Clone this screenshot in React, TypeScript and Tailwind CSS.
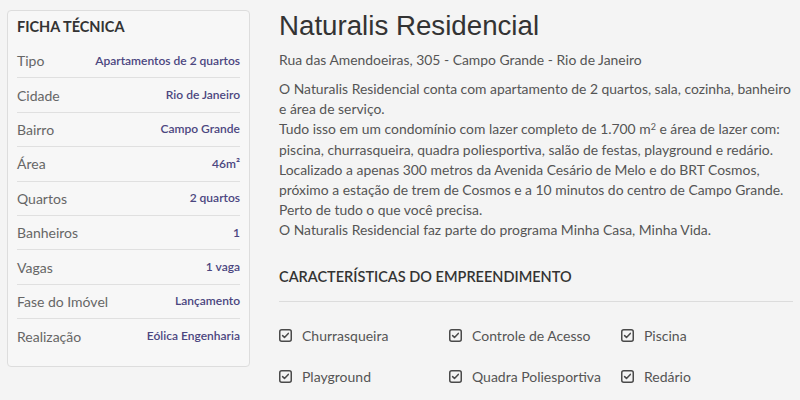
import React from "react";

const rows: [string, string][] = [
  ["Tipo", "Apartamentos de 2 quartos"],
  ["Cidade", "Rio de Janeiro"],
  ["Bairro", "Campo Grande"],
  ["Área", "46m²"],
  ["Quartos", "2 quartos"],
  ["Banheiros", "1"],
  ["Vagas", "1 vaga"],
  ["Fase do Imóvel", "Lançamento"],
  ["Realização", "Eólica Engenharia"],
];

const features = [
  "Churrasqueira",
  "Controle de Acesso",
  "Piscina",
  "Playground",
  "Quadra Poliesportiva",
  "Redário",
];

function Check() {
  return (
    <svg width="13" height="13" viewBox="0 0 13 13" className="shrink-0">
      <rect x="0.75" y="0.75" width="11.5" height="11.5" rx="2" fill="none" stroke="#4a4a4a" strokeWidth="1.5" />
      <path d="M3.6 6.6 L5.5 8.4 L9.3 4.4" fill="none" stroke="#4a4a4a" strokeWidth="1.5" strokeLinecap="round" strokeLinejoin="round" />
    </svg>
  );
}

export default function App() {
  return (
    <div className="w-[800px] h-[400px] overflow-hidden bg-[#f4f4f4] flex gap-[29px] pl-[7px] pt-[10px]" style={{ fontFamily: "Lato, 'Open Sans', sans-serif" }}>
      <div className="w-[243px] h-[357px] shrink-0 bg-[#f7f7f7] border border-[#dddddd] rounded-[4px] px-[9px] pt-[7px]">
        <div className="text-[14.5px] font-bold text-[#333] h-[26px] leading-[18px]">FICHA TÉCNICA</div>
        <div className="flex flex-col">
          {rows.map(([k, v], i) => (
            <div key={k} className={`flex justify-between items-center h-[34.4px] ${i < rows.length - 1 ? "border-b border-[#e0e0e0]" : ""}`}>
              <span className="text-[14px] text-[#666]">{k}</span>
              <span className="text-[12px] font-semibold text-[#4b4680]">{v}</span>
            </div>
          ))}
        </div>
      </div>
      <div className="flex-1 pr-[7px]">
        <h1 className="text-[27.7px] leading-[30px] text-[#333] mt-[1px]" style={{ fontFamily: "'Liberation Sans', Arial, sans-serif" }}>
          Naturalis Residencial
        </h1>
        <div className="text-[13.9px] text-[#555] mt-[9px] leading-[20px]">Rua das Amendoeiras, 305 - Campo Grande - Rio de Janeiro</div>
        <p className="text-[13.9px] text-[#555] leading-[20.2px] mt-[9px]">
          O Naturalis Residencial conta com apartamento de 2 quartos, sala, cozinha, banheiro e área de serviço.
          <br />
          Tudo isso em um condomínio com lazer completo de 1.700 m<span className="relative -top-[4px] text-[9px] leading-none">2</span> e área de lazer com: piscina, churrasqueira, quadra poliesportiva, salão de festas, playground e redário.
          <br />
          Localizado a apenas 300 metros da Avenida Cesário de Melo e do BRT Cosmos, próximo a estação de trem de Cosmos e a 10 minutos do centro de Campo Grande.
          <br />
          Perto de tudo o que você precisa.
          <br />
          O Naturalis Residencial faz parte do programa Minha Casa, Minha Vida.
        </p>
        <div className="mt-[26px] text-[14.5px] font-semibold text-[#333] leading-[20px]">CARACTERÍSTICAS DO EMPREENDIMENTO</div>
        <div className="border-b border-[#dcdcdc] mt-[14px]" />
        <div className="grid grid-cols-[170px_172px_1fr] gap-y-[21px] mt-[24px]">
          {features.map((f) => (
            <div key={f} className="flex items-center gap-[10px] h-[20px]">
              <Check />
              <span className="text-[14px] text-[#555]">{f}</span>
            </div>
          ))}
        </div>
      </div>
    </div>
  );
}
